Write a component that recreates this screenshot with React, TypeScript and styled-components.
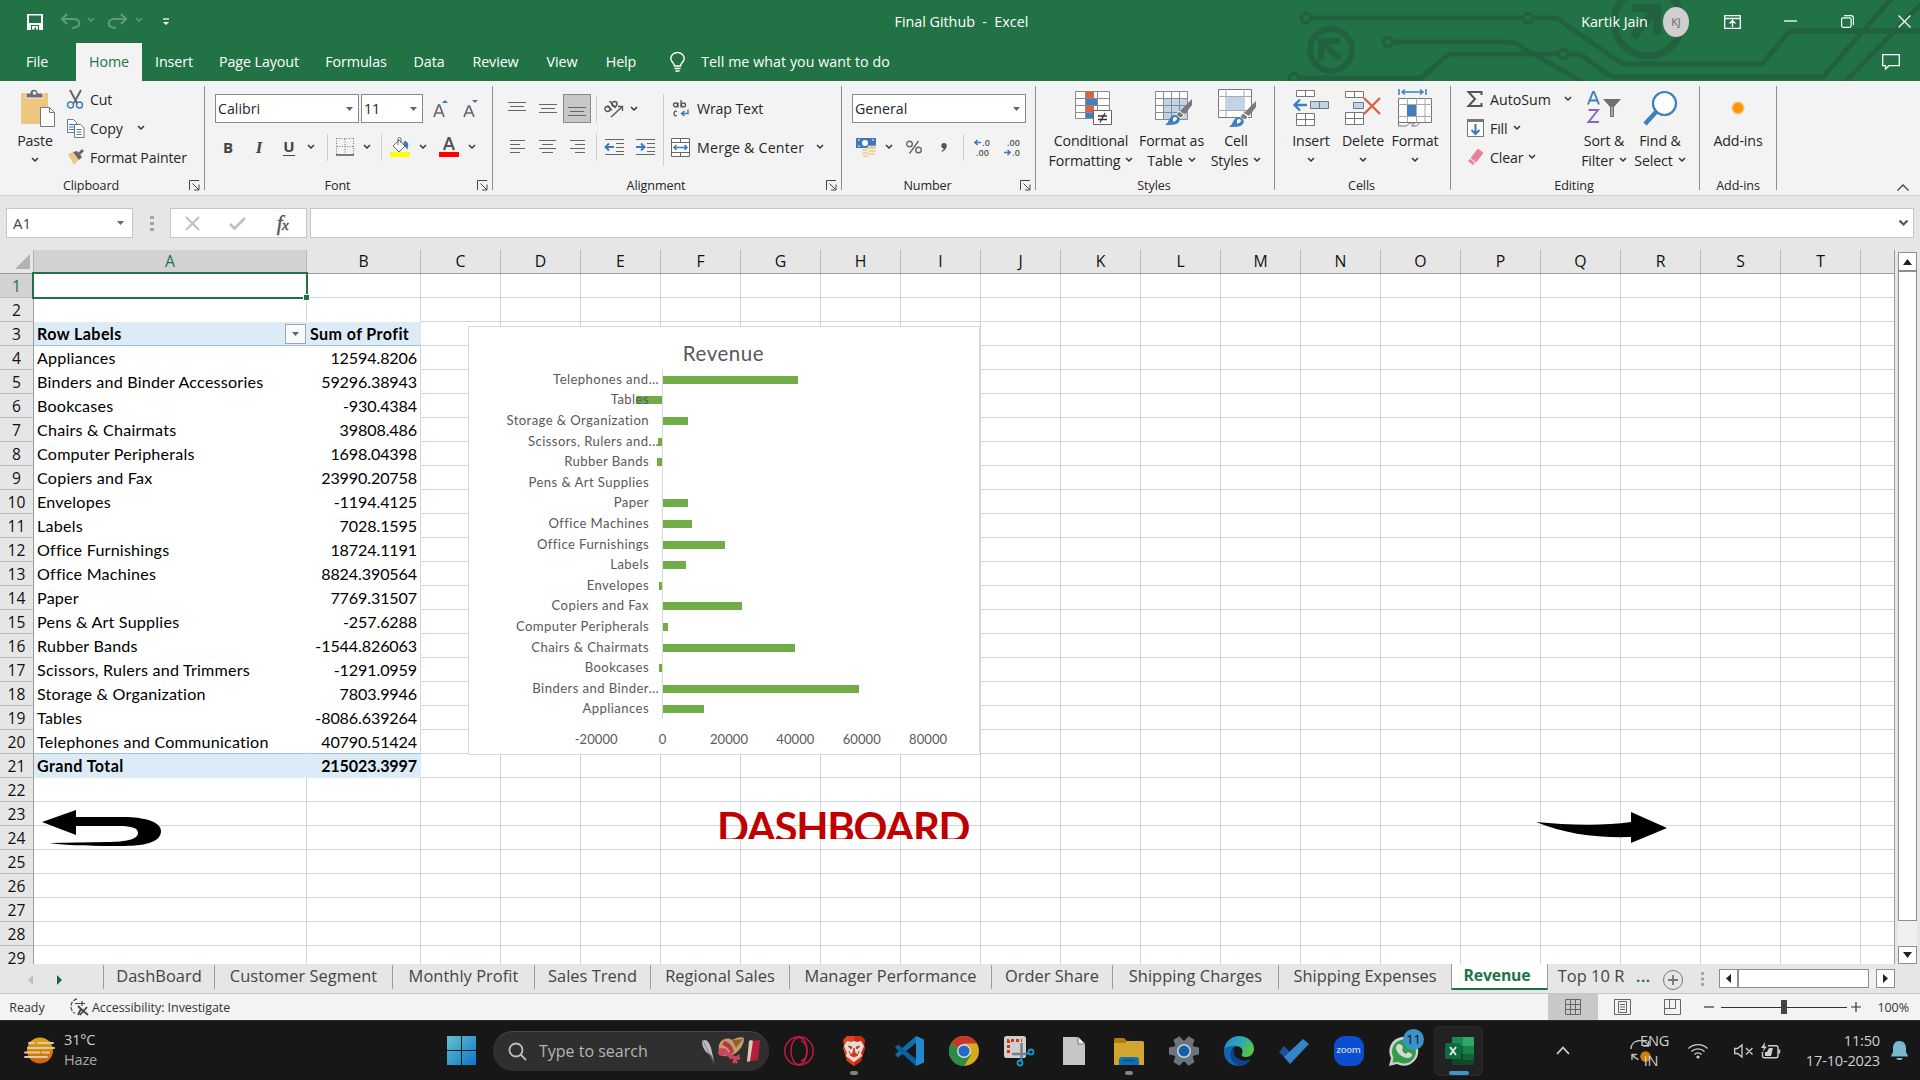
import React from "react";
import styled, { createGlobalStyle } from "styled-components";

const UI = '"Open Sans", "Noto Sans", sans-serif';
const CELL = 'Lato, "Open Sans", sans-serif';

const Global = createGlobalStyle`
  *, *::before, *::after { box-sizing: border-box; }
  html, body { margin: 0; padding: 0; }
  body { font-family: ${UI}; font-size: 14px; color: #262626; overflow: hidden; background: #e6e6e6; }
  svg { display: block; flex-shrink: 0; overflow: visible; }
`;

const Window = styled.div`
  width: 1920px; height: 1080px; display: flex; flex-direction: column; overflow: hidden;
`;

/* ---------- shared ---------- */
const Slot = styled.div<{ $w: number; $align?: string }>`
  width: ${(p) => p.$w}px; flex-shrink: 0; display: flex; align-items: center;
  justify-content: ${(p) => p.$align || "center"}; white-space: nowrap;
`;
const Divider = styled.div<{ $h: number; $c?: string }>`
  width: 1px; height: ${(p) => p.$h}px; background: ${(p) => p.$c || "#cfcfcf"};
`;

const Chevron = ({ c = "#333" }: { c?: string }) => (
  <svg width="8" height="6" viewBox="0 0 8 6"><path d="M1 1l3 3 3-3" fill="none" stroke={c} strokeWidth="1.5" /></svg>
);
const Triangle = ({ c = "#666" }: { c?: string }) => (
  <svg width="7" height="4" viewBox="0 0 7 4"><path d="M0 0h7L3.500 4z" fill={c} /></svg>
);

/* ---------- title bar ---------- */
const Header = styled.header`
  position: relative; height: 81px; flex-shrink: 0; background: #217346; color: #fff;
  display: flex; flex-direction: column;
`;
const HeaderArt = styled.svg`position: absolute; right: 0; top: 0; overflow: hidden;`;
const TitleRow = styled.div`position: relative; height: 43px; display: flex; align-items: center;`;
const TitleText = styled.div`
  width: 200px; margin-left: 664px; text-align: center; font-size: 14.3px; white-space: pre; letter-spacing: 0;
`;
const UserName = styled.div`margin-left: 509px; width: 138px; white-space: nowrap; text-align: right; padding-right: 35px; font-size: 14.3px; letter-spacing: 0;`;
const Avatar = styled.div`
  width: 30px; height: 30px; border-radius: 50%; background: #d0cece; color: #666; margin-left: -20px;
  display: flex; align-items: center; justify-content: center; font-size: 11px; letter-spacing: -0.3px;
`;
const TabRow = styled.nav`position: relative; height: 38px; display: flex; align-items: stretch;`;
const Tab = styled.div<{ $w: number; $on?: boolean }>`
  width: ${(p) => p.$w}px; display: flex; align-items: center; justify-content: center; white-space: nowrap;
  font-size: 14.3px; letter-spacing: -0.1px; color: ${(p) => (p.$on ? "#217346" : "#fff")};
  background: ${(p) => (p.$on ? "#f3f3f3" : "transparent")}; padding-bottom: 2px;
`;

/* ---------- ribbon ---------- */
const Ribbon = styled.section`
  height: 115px; flex-shrink: 0; background: #f3f3f3; border-bottom: 1px solid #d0d0d0; display: flex; padding-top: 5px;
`;
const Group = styled.div<{ $w: number }>`
  position: relative; width: ${(p) => p.$w}px; height: 104px; border-right: 1px solid #8f8f8f;
  display: flex; flex-direction: column; flex-shrink: 0;
`;
const GroupBody = styled.div<{ $pl?: number }>`height: 88px; flex-shrink: 0; display: flex; padding-left: ${(p) => p.$pl || 0}px;`;
const GroupName = styled.div<{ $pr?: number }>`
  height: 22px; flex-shrink: 0; display: flex; align-items: center; justify-content: center; font-size: 12.6px; letter-spacing: -0.1px; color: #262626;
  padding-right: ${(p) => p.$pr || 0}px;
`;
const LauncherBox = styled.div`position: absolute; right: 4px; bottom: -1px;`;
const Launcher = () => (
  <LauncherBox>
    <svg width="11" height="11" viewBox="0 0 11 11" fill="none" stroke="#444" strokeWidth="1">
      <path d="M.5 10V.500H10M3.500 3.500l6 6M10 4.500v5.500H5" />
    </svg>
  </LauncherBox>
);
const Rows = styled.div<{ $pt?: number; $gap?: number }>`
  display: flex; flex-direction: column; padding-top: ${(p) => p.$pt || 0}px; gap: ${(p) => p.$gap || 0}px;
`;
const Row = styled.div<{ $h: number }>`height: ${(p) => p.$h}px; display: flex; align-items: center;`;
const Label = styled.span<{ $ls?: number }>`font-size: 14.2px; letter-spacing: ${(p) => p.$ls ?? -0.15}px; white-space: nowrap;`;
const Big = styled.div<{ $w: number; $ml?: number }>`
  width: ${(p) => p.$w}px; margin-left: ${(p) => p.$ml || 0}px; display: flex; flex-direction: column; align-items: center; flex-shrink: 0;
`;
const BigIcon = styled.div<{ $dx?: number }>`height: 44px; display: flex; align-items: center; justify-content: center; padding-left: ${(p) => (p.$dx || 0) * 2}px;`;
const BigLine = styled.div`
  height: 20px; display: flex; align-items: center; gap: 5px; font-size: 14.2px; letter-spacing: -0.1px; white-space: nowrap;
`;
const Combo = styled.div<{ $w: number }>`
  width: ${(p) => p.$w}px; height: 29px; background: #fff; border: 1px solid #8a8a8a; margin-right: 2px;
  display: flex; align-items: center; justify-content: space-between; padding: 0 5px 0 2px; font-size: 14.2px; flex-shrink: 0;
`;
const Pressed = styled.div`
  width: 28px; height: 29px; background: #c8c8c8; border: 1px solid #8a8a8a; display: flex; align-items: center; justify-content: center;
`;
const Glyph = styled.span<{ $i?: boolean; $u?: boolean; $s?: number }>`
  font-family: ${(p) => (p.$i ? '"Liberation Serif", serif' : UI)}; font-weight: 700; font-size: ${(p) => p.$s || 15}px; color: #444;
  font-style: ${(p) => (p.$i ? "italic" : "normal")}; line-height: 17px;
  border-bottom: ${(p) => (p.$u ? "1px solid #444" : "0")};
`;

const Lines = ({ rows, w = 18 }: { rows: [number, number, number][]; w?: number }) => (
  <svg width={w} height="16" viewBox={`0 0 ${w} 16`} stroke="#666" strokeWidth="1">
    {rows.map(([x1, x2, y], i) => <path key={i} d={`M${x1} ${y + 0.5}H${x2}`} />)}
  </svg>
);
const GrowA = ({ up }: { up?: boolean }) => (
  <svg width="17" height="18" viewBox="0 0 17 18">
    <path d={up ? "M2 17L6.500 5h1L12 17M3.800 13h6.500" : "M2 17L6.500 6h1L12 17M3.800 13h6.500"} fill="none" stroke="#666" strokeWidth="1.7" />
    <path d={up ? "M10 3l3-3 3 3z" : "M10 0h6l-3 3z"} fill="#3f78b8" />
  </svg>
);
const Indent = ({ right }: { right?: boolean }) => (
  <svg width="19" height="18" viewBox="0 0 19 18" fill="none">
    <path d="M0 1.500h19M11 5.500h8M11 9.500h8M11 13.500h8M0 16.500h19" stroke="#666" />
    <path d={right ? "M0 9h8M5 5.500L8.500 9 5 12.500" : "M1 9h8M4 5.500L.500 9 4 12.500"} stroke="#3f78b8" strokeWidth="2" />
  </svg>
);
const Brush = ({ x, y }: { x: number; y: number }) => (
  <g transform={`translate(${x} ${y})`}>
    <path d="M27 0v6l-7 9-5-3z" fill="#7a7a7a" />
    <path d="M14 12l5 4-3 3-5-3z" fill="#7a7a7a" stroke="#f3f3f3" />
    <path d="M0 26c4-2 4-9 9-10 5 0 7 4 5 7-2 3-8 3-14 3z" fill="#3f7fbf" />
    <path d="M8 19c2-2 4-1 4 1-1 2-3 2-4 3z" fill="#fff" />
  </g>
);

/* ---------- formula bar ---------- */
const FormulaBar = styled.section`
  height: 54px; flex-shrink: 0; background: #e6e6e6; display: flex; padding: 12px 6px 0; align-items: flex-start;
`;
const Field = styled.div<{ $w: number; $ml?: number }>`
  width: ${(p) => p.$w}px; height: 30px; margin-left: ${(p) => p.$ml || 0}px; background: #fff; border: 1px solid #c6c6c6;
  display: flex; align-items: center; justify-content: space-between; padding: 0 8px 0 6px; font-size: 15px; color: #444;
`;
const Input = styled(Field)`padding-right: 5px;`;
const Fx = styled.span`font-family: "Liberation Serif", serif; font-style: italic; font-size: 21px; font-weight: 400; color: #555; letter-spacing: -0.5px; -webkit-text-stroke: 0.4px #555;
  small { font-size: 15px; }`;

/* ---------- sheet ---------- */
const Main = styled.main`height: 715px; flex-shrink: 0; display: flex; background: #e6e6e6;`;
const Sheet = styled.div`position: relative; width: 1895px; height: 714px; overflow: hidden; border-right: 1px solid #9b9b9b;`;
const HeadRow = styled.div`display: flex; height: 24px; border-bottom: 1px solid #9b9b9b;`;
const Corner = styled.div`width: 34px; border-right: 1px solid #b1b1b1; display: flex; align-items: flex-end; justify-content: flex-end; padding: 0 3px 4px 0; background: #e6e6e6;`;
const ColHead = styled.div<{ $w: number; $on?: boolean }>`
  width: ${(p) => p.$w}px; flex-shrink: 0; border-right: 1px solid #b8b8b8; background: ${(p) => (p.$on ? "#d2d2d2" : "#e6e6e6")};
  color: ${(p) => (p.$on ? "#217346" : "#111")}; display: flex; align-items: center; justify-content: center; font-size: 15.8px; padding-bottom: 1px;
`;
const GridRow = styled.div`display: flex; height: 24px; width: 1894px; background: #fff;`;
const RowHead = styled.div<{ $on?: boolean }>`
  width: 34px; flex-shrink: 0; border-right: 1px solid #9b9b9b; border-bottom: 1px solid #bdbdbd;
  background: ${(p) => (p.$on ? "#d2d2d2" : "#e6e6e6")}; color: ${(p) => (p.$on ? "#217346" : "#111")};
  font-size: 15.6px; line-height: 24px; text-align: center;
`;
const Cell = styled.div<{ $w: number; $tone?: string; $right?: boolean; $num?: boolean }>`
  width: ${(p) => p.$w}px; flex-shrink: 0; padding: 0 3px; white-space: nowrap;
  font: 400 16.1px/25px ${CELL}; color: #000; letter-spacing: ${(p) => (p.$num ? -0.12 : p.$tone === "head" || p.$tone === "total" ? 0.4 : 0.22)}px;
  border-right: 1px solid #d4d4d4; border-bottom: 1px solid #d4d4d4; display: flex; align-items: center;
  justify-content: ${(p) => (p.$right ? "flex-end" : "space-between")};
  ${(p) => p.$tone === "head" && "background:#ddebf7;border-right-color:#ddebf7;border-bottom-color:#9bc2e6;font-weight:700;"}
  ${(p) => p.$tone === "total" && "background:#ddebf7;border-right-color:#ddebf7;border-bottom-color:#ddebf7;font-weight:700;"}
  ${(p) => p.$tone === "body" && "border-color:#fff;"}
  ${(p) => p.$tone === "edge" && "border-bottom-color:#fff;"}
  ${(p) => p.$tone === "last" && "border-right-color:#fff;border-bottom-color:#9bc2e6;"}
  ${(p) => p.$right && (p.$tone === "body" || p.$tone === "last") && "border-right-color:#d4d4d4;"}
`;
const FilterButton = styled.span`
  width: 21px; height: 20px; margin-right: -3px; border: 1px solid #a6a6a6; background: #f7f9fb; display: flex; align-items: center; justify-content: center;
`;
const Selection = styled.div`
  position: absolute; left: 32px; top: 22px; width: 276px; height: 27px; border: 2px solid #217346;
  &::after { content: ""; position: absolute; right: -3px; bottom: -3px; width: 5px; height: 5px; background: #217346; box-shadow: 0 0 0 1px #fff; }
`;
const Chart = styled.div`
  position: absolute; left: 468px; top: 76px; width: 512px; height: 429px; background: #fff; border: 1px solid #d9d9d9;
  display: flex; flex-direction: column; font-family: ${CELL}; color: #595959;
`;
const ChartTitle = styled.div`height: 42px; flex-shrink: 0; padding-top: 12px; text-align: center; font-size: 20.5px; line-height: 28px; letter-spacing: 0.55px; padding-right: 1px;`;
const Plot = styled.div`height: 350px; flex-shrink: 0; display: flex; flex-direction: column;`;
const ChartRow = styled.div`flex: 1; display: flex; align-items: center;`;
const ChartLabel = styled.div<{ $cut?: boolean }>`
  width: 193px; padding-right: ${(p) => (p.$cut ? 3 : 13)}px; text-align: right; font-size: 13.1px; white-space: nowrap; letter-spacing: 0.42px;
  position: relative; z-index: 1; margin-top: -1px;
`;
const Track = styled.div`width: 300px; height: 100%; border-left: 1px solid #d9d9d9; display: flex; align-items: center;`;
const Bar = styled.div`height: 8px; background: #70ad47; margin-top: 1px; flex-shrink: 0;`;
const Axis = styled.div`display: flex; padding: 4px 0 0 94px; height: 35px; flex-shrink: 0; align-items: center;`;
const Tick = styled.div`width: 66.4px; text-align: center; font-size: 13px; letter-spacing: 0.1px;`;
const SheetTitle = styled.div`
  position: absolute; left: 717px; top: 552px; width: 256px; height: 37px; overflow: hidden; white-space: nowrap;
  font: 700 42px/50px ${CELL}; color: #c00000; letter-spacing: -1.35px;
`;
const ArrowBack = styled.svg`position: absolute; left: 42px; top: 559px;`;
const ArrowNext = styled.svg`position: absolute; left: 1536px; top: 562px;`;

const VScroll = styled.div`width: 19px; margin: 2px 0 1px 3px; display: flex; flex-direction: column; background: #f0f0f0;`;
const ScrollBtn = styled.div<{ $w: number; $h: number }>`
  width: ${(p) => p.$w}px; height: ${(p) => p.$h}px; border: 1px solid #8e8e8e; background: #fff; display: flex; align-items: center; justify-content: center; flex-shrink: 0;
`;
const ScrollGap = styled.div`flex: 1;`;

/* ---------- sheet tabs ---------- */
const SheetTabs = styled.div`height: 29px; flex-shrink: 0; background: #e6e6e6; border-bottom: 1px solid #c6c6c6; display: flex;`;
const SheetTab = styled.div<{ $w: number; $on?: boolean; $line?: boolean }>`
  position: relative; width: ${(p) => p.$w}px; height: ${(p) => (p.$on ? 26 : 24)}px; margin-top: ${(p) => (p.$on ? -1 : 0)}px; flex-shrink: 0; white-space: nowrap;
  font-size: ${(p) => (p.$on ? 15.8 : 16.4)}px; letter-spacing: ${(p) => (p.$on ? -0.2 : 0.05)}px; line-height: ${(p) => (p.$on ? 23 : 21)}px; text-align: center; color: ${(p) => (p.$on ? "#217346" : "#444")};
  font-weight: ${(p) => (p.$on ? 700 : 400)}; background: ${(p) => (p.$on ? "#fff" : "transparent")};
  border-bottom: ${(p) => (p.$on ? "2px solid #217346" : "0")};
  border-left: ${(p) => (p.$on ? "1px solid #9b9b9b" : "0")};
  border-right: ${(p) => (p.$line || p.$on ? "1px solid #9b9b9b" : "0")};
  padding-right: ${(p) => (p.$on ? 5 : 0)}px;
`;
const Nav = styled.div`width: 104px; height: 24px; border-right: 1px solid #9b9b9b; display: flex; align-items: center; padding: 6px 0 0 28px; gap: 24px;`;
const TabDots = styled.span`color: #217346; font-weight: 700; font-size: 15px; line-height: 22px; width: 22px; padding-left: 2px; letter-spacing: 0.6px;`;
const HTrack = styled.div`display: flex; margin: 4px 0 0 14px; height: 19px; background: #f0f0f0; width: 176px; justify-content: space-between;`;
const HLeft = styled.div`display: flex;`;
const HDots = styled.div`margin: 7px 0 0 11px;`;

/* ---------- status ---------- */
const Status = styled.footer`height: 26px; flex-shrink: 0; background: #f3f3f3; display: flex; align-items: center; font-size: 12.5px; letter-spacing: -0.05px; color: #333;`;
const ViewBtn = styled.div<{ $w: number; $on?: boolean }>`
  width: ${(p) => p.$w}px; height: 26px; background: ${(p) => (p.$on ? "#c8c8c8" : "transparent")}; display: flex; align-items: center; justify-content: center; flex-shrink: 0;
`;
const Zoom = styled.div`width: 126px; flex-shrink: 0; margin: 0 4px 0 7px; height: 15px; display: flex; align-items: center; justify-content: center;
  background: linear-gradient(#333, #333) 0 7px / 100% 1px no-repeat;`;
const Thumb = styled.div`width: 6px; height: 14px; background: #444;`;

/* ---------- taskbar ---------- */
const Taskbar = styled.div`
  height: 60px; flex-shrink: 0; background: #171717; border-top: 1px solid #2c2c2c; display: flex; align-items: center; color: #cfcfcf; font-size: 14.6px; letter-spacing: -0.2px;
`;
const Weather = styled.div`width: 424px; flex-shrink: 0; padding-left: 24px; display: flex; align-items: center; gap: 9px; line-height: 20px;`;
const WeatherText = styled.div`margin-top: -3px; line-height: 20px;`;
const Dim = styled.div`color: #a8a8a8;`;
const Search = styled.div`
  width: 276px; flex-shrink: 0; height: 40px; border-radius: 20px; background: #2f2f2f; border-top: 1px solid #484848; margin: 0 2px 0 17px;
  display: flex; align-items: center; padding: 0 8px 0 15px; font-size: 16px; letter-spacing: 0; color: #b5b5b5;
`;
const SearchText = styled.span`flex: 1; padding-left: 12px;`;
const AppButton = styled.div<{ $on?: boolean }>`
  position: relative; width: 49px; height: 50px; margin: 0 3px; border-radius: 6px; flex-shrink: 0;
  background: ${(p) => (p.$on ? "#222" : "transparent")}; box-shadow: ${(p) => (p.$on ? "inset 0 0 0 1px #2b2b2b" : "none")};
  display: flex; align-items: center; justify-content: center;
`;
const Run = styled.div<{ $on?: boolean }>`
  position: absolute; bottom: 1px; width: ${(p) => (p.$on ? 20 : 8)}px; height: 4px; border-radius: 2px; background: ${(p) => (p.$on ? "#3d96cc" : "#838383")};
`;
const Badge = styled.div`
  position: absolute; right: 4px; top: 3px; width: 21px; height: 21px; border-radius: 50%; background: #3a93c6; color: #0d0d0d;
  font-size: 13px; display: flex; align-items: center; justify-content: center;
`;
const ZoomApp = styled.div`
  width: 30px; height: 30px; border-radius: 11px; background: #0b4fd0; color: #c9d4ea; font-size: 9.5px; font-weight: 600; letter-spacing: -0.3px;
  display: flex; align-items: center; justify-content: center; line-height: 12px; padding-bottom: 2px;
`;
const Stack = styled.div<{ $w: number; $right?: boolean }>`
  width: ${(p) => p.$w}px; flex-shrink: 0; text-align: ${(p) => (p.$right ? "right" : "center")}; line-height: 20px; white-space: nowrap; margin-top: -2px;
`;

/* ---------- data ---------- */
const data: [string, string][] = [
  ["Appliances", "12594.8206"], ["Binders and Binder Accessories", "59296.38943"], ["Bookcases", "-930.4384"],
  ["Chairs & Chairmats", "39808.486"], ["Computer Peripherals", "1698.04398"], ["Copiers and Fax", "23990.20758"],
  ["Envelopes", "-1194.4125"], ["Labels", "7028.1595"], ["Office Furnishings", "18724.1191"],
  ["Office Machines", "8824.390564"], ["Paper", "7769.31507"], ["Pens & Art Supplies", "-257.6288"],
  ["Rubber Bands", "-1544.826063"], ["Scissors, Rulers and Trimmers", "-1291.0959"], ["Storage & Organization", "7803.9946"],
  ["Tables", "-8086.639264"], ["Telephones and Communication", "40790.51424"],
];
const shortNames: Record<string, string> = {
  "Telephones and Communication": "Telephones and...",
  "Scissors, Rulers and Trimmers": "Scissors, Rulers and...",
  "Binders and Binder Accessories": "Binders and Binder...",
};
const letters = "CDEFGHIJKLMNOPQRST".split("");
const tabs: [string, number][] = [
  ["DashBoard", 111], ["Customer Segment", 178], ["Monthly Profit", 142], ["Sales Trend", 116], ["Regional Sales", 139],
  ["Manager Performance", 202], ["Order Share", 121], ["Shipping Charges", 166], ["Shipping Expenses", 172],
];

const toneFor = (r: number) => (r === 2 ? "edge" : r === 3 ? "head" : r === 20 ? "last" : r === 21 ? "total" : r > 3 && r < 20 ? "body" : "");

const GridLine = ({ r }: { r: number }) => {
  const item = r > 3 && r < 21 ? data[r - 4] : r === 3 ? ["Row Labels", "Sum of Profit"] : r === 21 ? ["Grand Total", "215023.3997"] : ["", ""];
  const tone = toneFor(r);
  return (
    <GridRow>
      <RowHead $on={r === 1}>{r}</RowHead>
      <Cell $w={273} $tone={tone}>{item[0]}{r === 3 && <FilterButton><Triangle /></FilterButton>}</Cell>
      <Cell $w={114} $tone={tone} $right={r !== 3} $num={r !== 3}>{item[1]}</Cell>
      {letters.map((l) => <Cell key={l} $w={80} />)}
      <Cell $w={34} />
    </GridRow>
  );
};

const RevenueChart = () => (
  <Chart>
    <ChartTitle>Revenue</ChartTitle>
    <Plot>
      {[...data].reverse().map(([name, value]) => {
        const px = (Number(value) / 20000) * 66.4;
        const w = Math.floor(Math.abs(px));
        return (
          <ChartRow key={name}>
            <ChartLabel $cut={name in shortNames}>{shortNames[name] || name}</ChartLabel>
            <Track><Bar style={{ width: w, marginLeft: px < 0 ? -w - 1 : 0 }} /></Track>
          </ChartRow>
        );
      })}
    </Plot>
    <Axis>{[-20000, 0, 20000, 40000, 60000, 80000].map((t) => <Tick key={t}>{t}</Tick>)}</Axis>
  </Chart>
);

const Chevrons = ({ children }: { children: string }) => <BigLine>{children}<Chevron /></BigLine>;

const ClipboardGroup = () => (
  <Group $w={205}>
    <GroupBody>
      <Big $w={64} $ml={3}>
        <BigIcon $dx={3}>
          <svg width="36" height="38" viewBox="0 0 36 38">
            <path d="M1 4h27v31H1z" fill="#edc77f" /><path d="M6 9V4h4c0-5 8-5 8 0h5v5z" fill="#6e6e6e" stroke="#f3f3f3" /><circle cx="14.500" cy="4" r="1.800" fill="#f3f3f3" />
            <path d="M20.500 18.500h9l5 5v14h-14z" fill="#fff" stroke="#777" /><path d="M29.500 18.500v5h5" fill="none" stroke="#777" />
          </svg>
        </BigIcon>
        <BigLine>Paste</BigLine><BigLine><Chevron /></BigLine>
      </Big>
      <Rows>
        <Row $h={26}>
          <Slot $w={23} $align="flex-start"><svg width="17" height="19" viewBox="0 0 17 19" fill="none"><path d="M3 0l7 13M14 0L7 13" stroke="#666" strokeWidth="2" /><circle cx="3.500" cy="15" r="3" stroke="#3f78b8" strokeWidth="1.400" /><circle cx="12.500" cy="15" r="3" stroke="#3f78b8" strokeWidth="1.400" /></svg></Slot>
          <Label>Cut</Label>
        </Row>
        <Row $h={32}>
          <Slot $w={23} $align="flex-start"><svg width="18" height="19" viewBox="0 0 18 19"><path d="M.5.500h6l3 3v10h-9z" fill="#fff" stroke="#777" /><path d="M2 5.500h5M2 8h5M2 10.500h5" stroke="#3f78b8" /><path d="M7.500 5.500h6l3.500 3.500v9.500H7.500z" fill="#fff" stroke="#777" /><path d="M9.500 10.500h5M9.500 13h5M9.500 15.500h5" stroke="#3f78b8" /></svg></Slot>
          <Slot $w={46} $align="flex-start"><Label>Copy</Label></Slot><Slot $w={10}><Chevron /></Slot>
        </Row>
        <Row $h={26}>
          <Slot $w={23} $align="flex-start"><svg width="17" height="16" viewBox="0 0 17 16"><path d="M1 5l5-2 6 7-5 6z" fill="#edc77f" /><path d="M6 3l4-1 5 6-3 3z" fill="#666" /><path d="M11 4l4-4 2 2-4 4z" fill="#666" /></svg></Slot>
          <Label>Format Painter</Label>
        </Row>
      </Rows>
    </GroupBody>
    <GroupName $pr={22}>Clipboard</GroupName><Launcher />
  </Group>
);

const FontGroup = () => (
  <Group $w={288}>
    <GroupBody $pl={10}>
      <Rows $pt={8} $gap={4}>
        <Row $h={29}>
          <Combo $w={144}>Calibri<Triangle /></Combo><Combo $w={62}>11<Triangle /></Combo>
          <Slot $w={30}><GrowA up /></Slot><Slot $w={30}><GrowA /></Slot>
        </Row>
        <Row $h={40}>
          <Slot $w={26}><Glyph>B</Glyph></Slot><Slot $w={36}><Glyph $i $s={17}>I</Glyph></Slot><Slot $w={24}><Glyph $u>U</Glyph></Slot>
          <Slot $w={20}><Chevron /></Slot><Slot $w={12}><Divider $h={27} /></Slot>
          <Slot $w={24}><svg width="18" height="18" viewBox="0 0 18 18" fill="none" stroke="#777"><path d="M.5 0v16M.5.500H17M17.500 0v16M9 1v15M1 8.500h16" strokeDasharray="1 1.500" /><path d="M0 17h18" strokeWidth="1.500" stroke="#555" /></svg></Slot>
          <Slot $w={20}><Chevron /></Slot><Slot $w={8}><Divider $h={27} /></Slot>
          <Slot $w={30}><svg width="20" height="20" viewBox="0 0 20 20"><path d="M14 4c5 0 5 5 3 9-1-3-2-4-4-4z" fill="#3f78b8" /><path d="M9 3l6 6-6 6-6-6z" fill="#fff" stroke="#666" /><path d="M8 8V2c0-2 3-2 3 0v4" fill="none" stroke="#666" /><path d="M0 15h20v5H0z" fill="#ff0" /></svg></Slot>
          <Slot $w={16}><Chevron /></Slot>
          <Slot $w={36}><svg width="20" height="20" viewBox="0 0 20 20"><path d="M5 13L9.500 1h1L15 13M6.500 9h7" fill="none" stroke="#555" strokeWidth="2.200" /><path d="M0 15h20v5H0z" fill="#f00" /></svg></Slot>
          <Slot $w={10}><Chevron /></Slot>
        </Row>
      </Rows>
    </GroupBody>
    <GroupName $pr={22}>Font</GroupName><Launcher />
  </Group>
);

const AlignGroup = () => (
  <Group $w={349}>
    <GroupBody $pl={9}>
      <Rows $pt={8} $gap={4}>
        <Row $h={29}>
          <Slot $w={30}><Lines rows={[[0, 18, 1], [2, 16, 5], [0, 18, 9]]} /></Slot>
          <Slot $w={31}><Lines rows={[[0, 18, 3], [2, 16, 7], [0, 18, 11]]} /></Slot>
          <Pressed><Lines rows={[[0, 18, 6], [2, 16, 10], [0, 18, 14]]} /></Pressed>
          <Slot $w={10}><Divider $h={28} /></Slot>
          <Slot $w={26}><svg width="20" height="18" viewBox="0 0 20 18" fill="none" stroke="#555" strokeWidth="1.400"><circle cx="3.500" cy="9" r="2.500" /><path d="M3.500 5.500l4.500 5M5.500 1l6 7" /><circle cx="10.500" cy="4" r="2.500" /><path d="M7 17L18 7M14 6.500h4.500V11" /></svg></Slot>
          <Slot $w={14}><Chevron /></Slot>
        </Row>
        <Row $h={40}>
          <Slot $w={30}><Lines w={15} rows={[[0, 15, 1], [0, 10, 5], [0, 15, 9], [0, 10, 13]]} /></Slot>
          <Slot $w={31}><Lines w={17} rows={[[0, 17, 1], [3, 14, 5], [0, 17, 9], [3, 14, 13]]} /></Slot>
          <Slot $w={28}><Lines w={15} rows={[[0, 15, 1], [5, 15, 5], [0, 15, 9], [5, 15, 13]]} /></Slot>
          <Slot $w={10}><Divider $h={28} /></Slot>
          <Slot $w={26}><Indent /></Slot><Slot $w={36}><Indent right /></Slot>
        </Row>
      </Rows>
      <Slot $w={1}><Divider $h={72} /></Slot>
      <Rows $pt={8} $gap={4}>
        <Row $h={29}>
          <Slot $w={33}><svg width="19" height="19" viewBox="0 0 19 19" fill="none" stroke="#555" strokeWidth="1.300"><circle cx="4.500" cy="6" r="2" /><path d="M7 3.500V8.500M10 1v7.500" /><circle cx="12.500" cy="6" r="2" /><path d="M6 12.500c-4-2-4 6 0 4" /><path d="M17 10.500v4h-6M13.500 12l-3 2.500 3 2.500" stroke="#3f78b8" strokeWidth="1.500" /></svg></Slot>
          <Label>Wrap Text</Label>
        </Row>
        <Row $h={40}>
          <Slot $w={33}><svg width="19" height="19" viewBox="0 0 19 19" fill="#fff" stroke="#666"><path d="M.5.500h18v18H.500zM9.500 0v4M9.500 15v4M0 4.500h19M0 14.500h19" /><path d="M3 9.500h13M5.500 7L3 9.500 5.500 12M13.500 7L16 9.500 13.500 12" fill="none" stroke="#3f78b8" strokeWidth="1.500" /></svg></Slot>
          <Slot $w={119} $align="flex-start"><Label $ls={0.2}>Merge &amp; Center</Label></Slot><Chevron />
        </Row>
      </Rows>
    </GroupBody>
    <GroupName $pr={22}>Alignment</GroupName><Launcher />
  </Group>
);

const Dec = ({ less }: { less?: boolean }) => (
  <svg width="17" height="18" viewBox="0 0 17 18" fontFamily={UI} fontSize="9" fontWeight="600" fill="#555" stroke="none">
    <text x={less ? 3 : 8} y="8" textLength={less ? 13 : 8}>{less ? ".00" : ".0"}</text>
    <text x={less ? 8 : 2} y="18" textLength={less ? 8 : 13}>{less ? ".0" : ".00"}</text>
    <path d={less ? "M0 14.500h6M3.500 12L6 14.500 3.500 17" : "M1 4.500h6M3.500 2L1 4.500 3.500 7"} fill="none" stroke="#3f78b8" strokeWidth="1.600" />
  </svg>
);

const NumberGroup = () => (
  <Group $w={194}>
    <GroupBody $pl={10}>
      <Rows $pt={8} $gap={4}>
        <Row $h={29}><Combo $w={174}>General<Triangle /></Combo></Row>
        <Row $h={40}>
          <Slot $w={28}><svg width="20" height="20" viewBox="0 0 20 20"><path d="M0 1h20v10H0z" fill="#3f78b8" /><circle cx="9" cy="6" r="3" fill="#fff" /><path d="M2 3h2M2 9h2M16 3h2" stroke="#fff" /><path d="M12 9h8v3h-8zM12 13h8v2h-8zM11 16h8v2h-8zM6 12h7v2H6zM6 15h7v2H6zM7 18h6v2H7z" fill="#edc77f" stroke="#f3f3f3" strokeWidth=".6" /></svg></Slot>
          <Slot $w={17}><Chevron /></Slot>
          <Slot $w={34}><svg width="16" height="14" viewBox="0 0 16 14" fill="none" stroke="#666" strokeWidth="1.400"><circle cx="3.500" cy="4" r="2.800" /><circle cx="12.500" cy="10" r="2.800" /><path d="M12.500 1l-9 12.500" /></svg></Slot>
          <Slot $w={26}><svg width="6" height="9" viewBox="0 0 6 9"><path d="M3 0c4 0 4 6-2 9l-.5-1C2.500 7 3 6 2.500 5.500-.5 5-.5 0 3 0z" fill="#555" /></svg></Slot>
          <Slot $w={12}><Divider $h={27} /></Slot>
          <Slot $w={26}><Dec /></Slot><Slot $w={34}><Dec less /></Slot>
        </Row>
      </Rows>
    </GroupBody>
    <GroupName $pr={22}>Number</GroupName><Launcher />
  </Group>
);

const StylesGroup = () => (
  <Group $w={239}>
    <GroupBody>
      <Big $w={84} $ml={13}>
        <BigIcon $dx={2}><svg width="37" height="34" viewBox="0 0 37 34"><path d="M.5.500h34v27H.500z" fill="#fff" /><path d="M11 0h8v7h-8zM11 14h8v7h-8z" fill="#d9623f" /><path d="M11 7h11v7H11zM11 21h8v7h-8z" fill="#3f7fbf" /><path d="M.5.500h34v27H.500zM10.500 0v28M22.500 0v28M0 7.500h34M0 14.500h34M0 21.500h34" fill="none" stroke="#8a8a8a" /><path d="M18.500 19.500h18v14h-18z" fill="#fff" stroke="#666" /><path d="M23 25h9M23 28.500h9M30 22l-5 9.500" stroke="#333" strokeWidth="1.300" /></svg></BigIcon>
        <BigLine>Conditional</BigLine><Chevrons>Formatting</Chevrons>
      </Big>
      <Big $w={77}>
        <BigIcon $dx={2}><svg width="37" height="35" viewBox="0 0 37 35"><path d="M.5.500h32v28H.500z" fill="#fff" /><path d="M8 8h24v20H8z" fill="#bfd3ea" /><path d="M.5.500h32v28H.500zM8.500 0v28M16.500 0v28M24.500 0v28M0 7.500h33M0 14.500h33M0 21.500h33" fill="none" stroke="#8a8a8a" /><Brush x={10} y={8} /></svg></BigIcon>
        <BigLine>Format as</BigLine><Chevrons>Table</Chevrons>
      </Big>
      <Big $w={52}>
        <BigIcon $dx={1}><svg width="38" height="38" viewBox="0 0 38 38"><path d="M.5.500h33v28H.500z" fill="#fff" stroke="#777" /><path d="M8 0v28M26 0v28M0 7.500h33M0 21.500h33" stroke="#aaa" /><path d="M8 8h18v13H8z" fill="#bfd3ea" /><Brush x={11} y={12} /></svg></BigIcon>
        <BigLine>Cell</BigLine><Chevrons>Styles</Chevrons>
      </Big>
    </GroupBody>
    <GroupName $pr={2}>Styles</GroupName>
  </Group>
);

const CellsGroup = () => (
  <Group $w={176}>
    <GroupBody>
      <Big $w={52} $ml={10}>
        <BigIcon><svg width="36" height="36" viewBox="0 0 36 36" fill="#fff" stroke="#777"><path d="M3.500.500h18v6h-18zM12.500.500v6M3.500 23.500h18v12h-18zM12.500 23.500v12M3.500 29.500h18" /><path d="M17.500 11.500h18v7h-18zM26.500 11.500v7" fill="#bfd3ea" /><path d="M2 15h12M7 9.500L1.500 15 7 20.500" fill="none" stroke="#3f7fbf" strokeWidth="2.400" /></svg></BigIcon>
        <BigLine>Insert</BigLine><BigLine><Chevron /></BigLine>
      </Big>
      <Big $w={52}>
        <BigIcon><svg width="36" height="36" viewBox="0 0 36 36" fill="#fff" stroke="#777"><path d="M.5 1.500h18v6h-18zM9.500 1.500v6M.5 22.500h18v12h-18zM9.500 22.500v12M.5 28.500h18" /><path d="M8.500 12.500h10v6h-10z" fill="#bfd3ea" /><path d="M19 8l16 16M35 8L19 24" fill="none" stroke="#d9623f" strokeWidth="2.400" /></svg></BigIcon>
        <BigLine>Delete</BigLine><BigLine><Chevron /></BigLine>
      </Big>
      <Big $w={52}>
        <BigIcon><svg width="35" height="38" viewBox="0 0 35 38" fill="none" stroke="#777"><path d="M1 0v6M28 0v6M4 3h21M7 .500L4 3l3 2.500M22 .500L25 3l-3 2.500" stroke="#3f7fbf" strokeWidth="1.500" /><path d="M.5 9.500h33v24H.500z" fill="#fff" /><path d="M9.500 9v24M18.500 9v24M27 9v24M0 15.500h34M0 27.500h34" stroke="#aaa" /><path d="M9 16h9v11H9z" fill="#3f7fbf" stroke="none" /><path d="M.5 33v4h8l3-3h5l-3 3h5l4-4" /></svg></BigIcon>
        <BigLine>Format</BigLine><BigLine><Chevron /></BigLine>
      </Big>
    </GroupBody>
    <GroupName $pr={2}>Cells</GroupName>
  </Group>
);

const EditingGroup = () => (
  <Group $w={249}>
    <GroupBody $pl={16}>
      <Rows>
        <Row $h={26}>
          <Slot $w={23} $align="flex-start"><svg width="16" height="16" viewBox="0 0 16 16"><path d="M14.500 4V1H1.500l6.500 7-6.500 7h13v-3" fill="none" stroke="#555" strokeWidth="2" /></svg></Slot>
          <Slot $w={74} $align="flex-start"><Label $ls={0}>AutoSum</Label></Slot><Chevron />
        </Row>
        <Row $h={32}>
          <Slot $w={23} $align="flex-start"><svg width="17" height="18" viewBox="0 0 17 18"><path d="M.5.500h16v17H.500z" fill="#fff" stroke="#777" /><path d="M0 0h17v3H0z" fill="#777" /><path d="M8.500 5v10M4.500 11l4 4 4-4" fill="none" stroke="#3f78b8" strokeWidth="2" /></svg></Slot>
          <Slot $w={23} $align="flex-start"><Label>Fill</Label></Slot><Chevron />
        </Row>
        <Row $h={26}>
          <Slot $w={23} $align="flex-start"><svg width="17" height="16" viewBox="0 0 17 16"><path d="M11 0l5 4-7 9-5-4z" fill="#e6839a" stroke="#e6839a" /><path d="M3 10l5 4-2 2-5-4z" fill="#e6839a" /></svg></Slot>
          <Slot $w={38} $align="flex-start"><Label>Clear</Label></Slot><Chevron />
        </Row>
      </Rows>
      <Big $w={56} $ml={4}>
        <BigIcon><svg width="34" height="34" viewBox="0 0 34 34" fill="none"><path d="M1 13.500L6 1h1l5 12.500M3 9.500h7" stroke="#3f7fbf" strokeWidth="1.900" /><path d="M1.500 19h9.500L1.500 31H12" stroke="#9163b5" strokeWidth="1.900" /><path d="M16 8h18l-7 8v10h-4V16z" fill="#707070" /><path d="M25 16v9" stroke="#ddd" /></svg></BigIcon>
        <BigLine>Sort &amp;</BigLine><Chevrons>Filter</Chevrons>
      </Big>
      <Big $w={56}>
        <BigIcon><svg width="35" height="35" viewBox="0 0 35 35"><path d="M13 21L2 33" stroke="#3f7fbf" strokeWidth="4.500" /><circle cx="21.500" cy="12.500" r="11.500" fill="#fff" stroke="#3f7fbf" strokeWidth="2.200" /></svg></BigIcon>
        <BigLine>Find &amp;</BigLine><Chevrons>Select</Chevrons>
      </Big>
    </GroupBody>
    <GroupName $pr={2}>Editing</GroupName>
  </Group>
);

const Collapse = styled.div`margin-left: auto; align-self: flex-end; padding: 0 11px 4px 0;`;

const icon = { width: 30, height: 30, viewBox: "0 0 30 30" };
const Opera = () => <svg {...icon} fill="none" stroke="#c01a42" strokeWidth="1.500"><circle cx="15" cy="15" r="14.200" /><ellipse cx="15" cy="15" rx="8" ry="13.500" /><path d="M17 5c8 1 8 19 0 20" /></svg>;
const Brave = () => (
  <svg {...icon}><path d="M8 0h14l4 4-1 5 1 3-4 13-7 5-7-5L4 12l1-3-1-5z" fill="#e2431c" /><path d="M15 0h7l4 4-1 5 1 3-4 13-7 5z" fill="#cf2a08" />
    <path d="M8 5l4 1 3-1 3 1 4-1 3 5-3 7 1 3-4 3-4 3-4-3-4-3 1-3-3-7z" fill="#ddd" /><path d="M9 10l4 1-1 2zM21 10l-4 1 1 2zM15 12l-1 5-3 2 4 2 4-2-3-2zM10 15l1 3M20 15l-1 3" fill="#d8380f" stroke="#d8380f" /></svg>
);
const VSCode = () => <svg {...icon}><path d="M22 0L1 18.500 4 21.500 22 7z" fill="#0f6db0" /><path d="M22 30L1 11.500 4 8.500 22 23z" fill="#0c5f9e" /><path d="M22 0l8 3.500v23L22 30z" fill="#2489ca" /></svg>;
const ChromeIcon = () => (
  <svg {...icon}><circle cx="15" cy="15" r="15" fill="#d9ab17" /><path d="M15 15L2 7.500A15 15 0 0 1 28 7.500H15z" fill="#c6362b" /><path d="M2 7.500A15 15 0 0 0 15 30l7-11-7-4z" fill="#2b8a46" /><circle cx="15" cy="15" r="7" fill="#ddd" /><circle cx="15" cy="15" r="5.600" fill="#2a65cc" /></svg>
);
const Snip = () => (
  <svg {...icon}><rect x="0" y="0" width="22" height="22" rx="2.500" fill="#cfcfcf" /><path d="M4.500 17V4.500H18" fill="none" stroke="#c93a12" strokeWidth="3" strokeDasharray="3 2" /><path d="M8 18h14M17.500 7v15" stroke="#7b8085" strokeWidth="2.500" /><circle cx="27" cy="16" r="2.500" fill="none" stroke="#2292c5" strokeWidth="1.800" /><circle cx="16" cy="27" r="2.500" fill="none" stroke="#2292c5" strokeWidth="1.800" /><path d="M21 18l4-1M17.500 21L17 25" stroke="#2292c5" strokeWidth="2" /></svg>
);
const FileIcon = () => <svg {...icon}><path d="M4 1h15l7 7v21H4z" fill="#c6c6c6" /><path d="M19 1v7h7" fill="#eee" stroke="#777" /></svg>;
const Folder = () => <svg {...icon}><path d="M0 4c0-1 0-2 2-2h8l3 3h15v4H0z" fill="#b07d05" /><path d="M0 7h11l2-2h15c2 0 2 1 2 2v22H0z" fill="#d2a52e" /><path d="M5 29v-5c0-2 1-3 3-3h14c2 0 3 1 3 3v5z" fill="#0f71b0" /><path d="M9 24.500h12" stroke="#0a4d80" strokeWidth="1.500" /></svg>;
const Gear = () => (
  <svg {...icon}><g fill="#6b737c">{[0, 60, 120, 180, 240, 300].map((a) => <path key={a} d="M10 7l1.500-7h7l1.500 7z" transform={`rotate(${a + 30} 15 15)`} />)}<circle cx="15" cy="15" r="10.500" /></g><circle cx="15" cy="15" r="7" fill="#ccd0d4" /><circle cx="15" cy="15" r="5.400" fill="#0f5ea8" /></svg>
);
const Edge = () => (
  <svg {...icon}><defs><linearGradient id="eg" x1="0" y1="0" x2="1" y2=".5"><stop offset="0" stopColor="#1d86c8" /><stop offset=".55" stopColor="#2fa8b5" /><stop offset="1" stopColor="#58c345" /></linearGradient></defs>
    <path d="M0 14C1 5 8 0 15 0c9 0 15 6 15 13 0 5-4 8-8 8-3 0-5-1-4-3 2-4-1-8-6-8C6 10 1 12 0 14z" fill="url(#eg)" /><path d="M0 14c2-3 7-5 12-4-4 2-6 6-4 11 2 5 6 8 11 8C10 32-1 26 0 14z" fill="#0f67b4" /><path d="M12 11c-3 3-3 8 1 11s10 3 14 1c-3 5-7 7-12 7-6-3-10-8-8-13 1-3 3-5 5-6z" fill="#10438a" /></svg>
);
const Todo = () => <svg {...icon}><path d="M0 16l5-6 7 7-5 6z" fill="#1d4f9f" /><path d="M5 21L24 3l6 5-19 20z" fill="#3384c9" /></svg>;
const WhatsApp = () => <svg {...icon}><path d="M0 30l2-8A14.500 14.500 0 1 1 8 28z" fill="#d0d0d0" /><path d="M3.500 26.500l1-5A12 12 0 1 1 9 26z" fill="#2f9e45" /><path d="M10 8l3 1 1 3-1 2c1 2 2 3 4 4l2-2 4 2c0 3-2 4-4 4-6 0-12-6-12-10 0-2 1-4 3-4z" fill="#d8d8d8" /></svg>;
const ExcelIcon = () => (
  <svg {...icon}><path d="M8 1h22v28H8z" fill="#17653d" /><path d="M8 1h11v9H8z" fill="#1c8a52" /><path d="M19 1h11v9H19z" fill="#2fa868" /><path d="M19 10h11v8H19z" fill="#188049" /><path d="M8 10h11v8H8z" fill="#14603a" /><path d="M8 18h22v11H8z" fill="#11472b" /><path d="M19 18h11v6H19z" fill="#146238" /><rect x="1" y="7" width="16" height="16" rx="1.500" fill="#0f6b3b" /><path d="M6 11l6 8M12 11l-6 8" stroke="#e6e6e6" strokeWidth="2" /></svg>
);

export default function App() {
  return (
    <Window>
      <Global />
      <Header>
        <HeaderArt width="640" height="81" viewBox="0 0 640 81" fill="none" stroke="#22613f" strokeWidth="5">
          <path d="M31 18H243M253 18h20c6 0 9 3 12 6l52 36c5 4 8 4 13 4h132l28-33h130" />
          <path d="M113 42h115c8 0 12 3 18 8l60 34M18 78h123l28-24h108M288 54h6c8 0 10 3 14 6l16 12c5 4 8 5 13 5h206l74-85M565 82l80-82" />
          <circle cx="26" cy="18" r="4.500" strokeWidth="3.500" /><circle cx="248" cy="18" r="4.500" strokeWidth="3.500" /><circle cx="108" cy="42" r="4.500" strokeWidth="3.500" /><circle cx="283" cy="54" r="4.500" strokeWidth="3.500" /><circle cx="14" cy="78" r="4.500" strokeWidth="3.500" />
          <circle cx="51" cy="50" r="21" strokeWidth="6" /><path d="M41 61V41h19M41 41l19 18" strokeWidth="6" />
          <circle cx="368" cy="22" r="34" strokeWidth="7" /><path d="M352 8h25v27M377 8l-24 29" strokeWidth="8" />
        </HeaderArt>
        <TitleRow>
          <Slot $w={210} $align="flex-start">
            <Slot $w={69}><svg width="16" height="16" viewBox="0 0 16 16"><path d="M0 0h16v16H0z" fill="#fff" /><path d="M2 1.500h12V9H2zM4 11h8v5H4z" fill="#217346" /><path d="M5 12h6v3.500H9v-2H7.500v2H5z" fill="#fff" /></svg></Slot>
            <svg width="90" height="16" viewBox="0 0 90 16" fill="none" stroke="#5e9c79" strokeWidth="2.200"><path d="M-6 5H4c8 0 9 8-1 9M-2 0l-5 5 5 5" /><path d="M19 4l3 3 3-3" strokeWidth="1.300" /><path d="M56 5H46c-8 0-9 8 1 9M52 0l5 5-5 5" /><path d="M67 4l3 3 3-3" strokeWidth="1.300" /></svg>
            <Slot $w={14}><svg width="6" height="8" viewBox="0 0 6 8"><path d="M0 1h6" stroke="#fff" strokeWidth="1.300" /><path d="M0 4h6L3 7z" fill="#fff" /></svg></Slot>
          </Slot>
          <TitleText>{"Final Github  -  Excel"}</TitleText>
          <UserName>Kartik Jain</UserName><Avatar>KJ</Avatar>
          <Slot $w={86}><svg width="17" height="14" viewBox="0 0 17 14" fill="none" stroke="#fff" strokeWidth="1.300"><path d="M.7.700h15.600v12.600H.700zM.7 3.500h15.600M8.500 12V6M5.500 8.500l3-3 3 3" /></svg></Slot>
          <Slot $w={30}><svg width="13" height="3" viewBox="0 0 13 3"><path d="M0 1h13" stroke="#fff" strokeWidth="1.300" /></svg></Slot>
          <Slot $w={84}><svg width="13" height="13" viewBox="0 0 13 13" fill="none" stroke="#fff" strokeWidth="1.200"><rect x=".6" y="2.800" width="9.500" height="9.500" rx="1.500" /><path d="M3 .600h7c1.500 0 2.400 1 2.400 2.400V10" /></svg></Slot>
          <Slot $w={31}><svg width="13" height="13" viewBox="0 0 13 13" stroke="#fff" strokeWidth="1.300"><path d="M.5.500l12 12M12.500.500l-12 12" /></svg></Slot>
        </TitleRow>
        <TabRow>
          <Tab $w={74}>File</Tab><Slot $w={2} /><Tab $w={66} $on>Home</Tab><Tab $w={64}>Insert</Tab><Tab $w={106}>Page Layout</Tab><Tab $w={88}>Formulas</Tab>
          <Tab $w={58}>Data</Tab><Tab $w={75}>Review</Tab><Tab $w={58}>View</Tab><Tab $w={60}>Help</Tab>
          <Slot $w={52}><svg width="15" height="20" viewBox="0 0 15 20" fill="none" stroke="#fff" strokeWidth="1.400"><path d="M4.500 14c0-3-3.700-4-3.700-7.500a6.700 6 0 0 1 13.400 0C14.200 10 10.500 11 10.500 14zM4.500 16.500h6M5.500 19h4" /></svg></Slot>
          <Tab $w={185}><Label $ls={0.08}>Tell me what you want to do</Label></Tab>
          <Slot $w={1012} $align="flex-end"><svg width="18" height="16" viewBox="0 0 18 16" fill="none" stroke="#fff" strokeWidth="1.300"><path d="M.7.700h16.600v11H7L3.500 15v-3.300H.700z" /></svg></Slot>
        </TabRow>
      </Header>

      <Ribbon>
        <ClipboardGroup /><FontGroup /><AlignGroup /><NumberGroup /><StylesGroup /><CellsGroup /><EditingGroup />
        <Group $w={77}>
          <GroupBody><Big $w={76}><BigIcon><svg width="14" height="14" viewBox="0 0 14 14"><circle cx="7" cy="7" r="6.500" fill="#ff9a1a" opacity=".6" /><circle cx="7" cy="7" r="5" fill="#ff9500" /></svg></BigIcon><BigLine>Add-ins</BigLine></Big></GroupBody>
          <GroupName>Add-ins</GroupName>
        </Group>
        <Collapse><svg width="12" height="7" viewBox="0 0 12 7"><path d="M.5 6.500L6 1l5.500 5.500" fill="none" stroke="#444" strokeWidth="1.300" /></svg></Collapse>
      </Ribbon>

      <FormulaBar>
        <Field $w={127}>A1<Triangle /></Field>
        <Slot $w={37}><svg width="4" height="30" viewBox="0 0 4 30" fill="#a5a5a5"><path d="M0 8h4v3H0zM0 14h4v3H0zM0 20h4v3H0z" /></svg></Slot>
        <Field $w={137}>
          <Slot $w={30}><svg width="15" height="13" viewBox="0 0 15 13"><path d="M1 0l13 13M14 0L1 13" stroke="#c0c0c0" strokeWidth="2" /></svg></Slot>
          <svg width="17" height="13" viewBox="0 0 17 13"><path d="M1 7l4.500 4.500L16 1" fill="none" stroke="#c0c0c0" strokeWidth="2.800" /></svg>
          <Slot $w={31}><Fx>f<small>x</small></Fx></Slot>
        </Field>
        <Input $w={1604} $ml={3}><span /><svg width="9" height="6" viewBox="0 0 9 6"><path d="M.5.500l4 4 4-4" fill="none" stroke="#555" strokeWidth="2.200" /></svg></Input>
      </FormulaBar>

      <Main>
        <Sheet>
          <HeadRow>
            <Corner><svg width="15" height="15" viewBox="0 0 15 15"><path d="M15 0v15H0z" fill="#b2b2b2" /></svg></Corner>
            <ColHead $w={273} $on>A</ColHead><ColHead $w={114}>B</ColHead>
            {letters.map((l) => <ColHead key={l} $w={80}>{l}</ColHead>)}
          </HeadRow>
          {Array.from({ length: 29 }, (_, i) => <GridLine key={i} r={i + 1} />)}
          <Selection />
          <RevenueChart />
          <SheetTitle>DASHBOARD</SheetTitle>
          <ArrowBack width="119" height="38" viewBox="0 0 119 38"><path d="M0 13L34 1v7h46c26 0 39 6 39 14 0 12-18 15-40 15-24 0-50 0-72-3l58-1c20 0 31-3 31-9 0-5-6-7-19-7H34v9z" /></ArrowBack>
          <ArrowNext width="131" height="32" viewBox="0 0 131 32"><path d="M0 10c30 3 68 4 95 0V0l36 16-36 15v-6C60 26 30 22 0 10z" /></ArrowNext>
        </Sheet>
        <VScroll>
          <ScrollBtn $w={19} $h={19}><svg width="9" height="6" viewBox="0 0 9 6"><path d="M0 6L4.500 0 9 6z" fill="#222" /></svg></ScrollBtn>
          <ScrollBtn $w={19} $h={650} /><ScrollGap />
          <ScrollBtn $w={19} $h={18}><svg width="9" height="6" viewBox="0 0 9 6"><path d="M0 0l4.500 6L9 0z" fill="#222" /></svg></ScrollBtn>
        </VScroll>
      </Main>

      <SheetTabs>
        <Nav><svg width="5" height="10" viewBox="0 0 5 10"><path d="M5 0v10L0 5z" fill="#bdbdbd" /></svg><svg width="5" height="10" viewBox="0 0 5 10"><path d="M0 0v10l5-5z" fill="#0f6b3b" /></svg></Nav>
        {tabs.map(([t, w], i) => <SheetTab key={t} $w={w} $line={i < 8}>{t}</SheetTab>)}
        <SheetTab $w={97} $on>Revenue</SheetTab>
        <SheetTab $w={86}>Top 10 R</SheetTab>
        <TabDots>...</TabDots>
        <Slot $w={34}><svg width="20" height="20" viewBox="0 0 20 20" fill="none" stroke="#777"><circle cx="10" cy="11" r="9.500" /><path d="M10 6v10M5 11h10" strokeWidth="1.800" /></svg></Slot>
        <HDots><svg width="4" height="14" viewBox="0 0 4 14" fill="#a5a5a5"><path d="M0 0h3v3H0zM0 5.500h3v3H0zM0 11h3v3H0z" /></svg></HDots>
        <HTrack>
          <HLeft><ScrollBtn $w={19} $h={19}><svg width="5" height="9" viewBox="0 0 5 9"><path d="M5 0v9L0 4.500z" fill="#222" /></svg></ScrollBtn><ScrollBtn $w={131} $h={19} /></HLeft>
          <ScrollBtn $w={19} $h={19}><svg width="5" height="9" viewBox="0 0 5 9"><path d="M0 0v9l5-4.500z" fill="#222" /></svg></ScrollBtn>
        </HTrack>
      </SheetTabs>

      <Status>
        <Slot $w={69} $align="flex-start"><Slot $w={54}>Ready</Slot></Slot>
        <Slot $w={23} $align="flex-start"><svg width="20" height="18" viewBox="0 0 20 18" fill="none" stroke="#444" strokeWidth="1.200"><path d="M8 .800A8 8 0 0 0 6 15.500" strokeDasharray="4 1.500" /><path d="M6 5.500h5M13 3v5M11 5.500h5" /><path d="M9 8l3 3-3 6M11 10l8 7M18 9l-7 8" strokeWidth="1.800" /></svg></Slot>
        <Slot $w={1456} $align="flex-start">Accessibility: Investigate</Slot>
        <ViewBtn $w={50} $on><svg width="16" height="16" viewBox="0 0 16 16" fill="none" stroke="#666"><path d="M.5.500h15v15H.500zM5.500 0v16M10.500 0v16M0 5.500h16M0 10.500h16" /></svg></ViewBtn>
        <ViewBtn $w={49}><svg width="17" height="16" viewBox="0 0 17 16" fill="none" stroke="#666"><path d="M.5.500h16v15H.500zM4.500 2.500h8v11h-8zM6 5.500h5M6 8h5M6 10.500h5" /></svg></ViewBtn>
        <ViewBtn $w={51}><svg width="17" height="16" viewBox="0 0 17 16" fill="none" stroke="#666"><path d="M.5.500h16v15H.500zM5.500 0v9.500M11.500 0v9.500M.5 9.500h11" /></svg></ViewBtn>
        <Slot $w={16} $align="flex-end"><svg width="10" height="2" viewBox="0 0 10 2"><path d="M0 1h10" stroke="#333" strokeWidth="1.200" /></svg></Slot>
        <Zoom><Thumb /></Zoom>
        <svg width="10" height="10" viewBox="0 0 10 10"><path d="M0 5h10M5 0v10" stroke="#333" strokeWidth="1.200" /></svg>
        <Slot $w={48} $align="flex-end">100%</Slot>
      </Status>

      <Taskbar>
        <Weather>
          <svg width="31" height="28" viewBox="0 0 31 28"><defs><linearGradient id="sun" x1="0" y1="0" x2="0" y2="1"><stop offset="0" stopColor="#d8a917" /><stop offset="1" stopColor="#cf5f10" /></linearGradient></defs><circle cx="16" cy="13.500" r="13" fill="url(#sun)" /><path d="M5 6h5M14 6h15M4 11h26M1 15.500h14M18 15.500h7M1 20h22" stroke="#dccba4" strokeWidth="2" strokeLinecap="round" /></svg>
          <WeatherText><div>31°C</div><Dim>Haze</Dim></WeatherText>
        </Weather>
        <Slot $w={52} $align="flex-end"><svg width="29" height="29" viewBox="0 0 29 29"><defs><linearGradient id="win" x1="0" y1="0" x2="1" y2="1"><stop offset="0" stopColor="#62c3cc" /><stop offset="1" stopColor="#0b74cc" /></linearGradient></defs><path d="M0 0h14v14H0zM15 0h14v14H15zM0 15h14v14H0zM15 15h14v14H15z" fill="url(#win)" /></svg></Slot>
        <Search>
          <svg width="19" height="19" viewBox="0 0 19 19" fill="none" stroke="#bdbdbd" strokeWidth="1.800"><circle cx="8" cy="8" r="6.500" /><path d="M12.500 12.500l5.500 5.500" /></svg>
          <SearchText>Type to search</SearchText>
          <svg width="60" height="28" viewBox="0 0 60 28"><path d="M1 4c5-4 9 4 10 11l2 9-3-6C4 16 1 10 1 4z" fill="#bcbcbc" /><path d="M2 4l11 22" stroke="#777" strokeWidth=".8" /><path d="M18 13C16 3 26-1 31 3c5-3 12-4 12-1 0 8-9 17-16 17-5 1-9-2-9-6z" fill="#c79d62" /><path d="M31 3l4 8 7-9z" fill="#8d6230" /><path d="M23 4c4 0 9 5 10 11l-3 2c-1-5-5-8-9-9z" fill="#b53450" /><circle cx="21" cy="15" r="4" fill="#c8465f" /><path d="M24 17l15 5M28 15l8 11M38 18l-6 8M24 12l6 10" stroke="#c8465f" strokeWidth="2.400" /><path d="M48 4l11-1-2 20-11 2z" fill="#b61d38" /><path d="M48 4l2-1 2 1-3 20-3 1z" fill="#d8cbb0" /></svg>
        </Search>
        <AppButton><Opera /></AppButton><AppButton><Brave /><Run /></AppButton><AppButton><VSCode /></AppButton><AppButton><ChromeIcon /></AppButton>
        <AppButton><Snip /></AppButton><AppButton><FileIcon /></AppButton><AppButton><Folder /><Run /></AppButton><AppButton><Gear /></AppButton>
        <AppButton><Edge /></AppButton><AppButton><Todo /></AppButton><AppButton><ZoomApp>zoom</ZoomApp></AppButton>
        <AppButton><WhatsApp /><Badge>11</Badge></AppButton><AppButton $on><ExcelIcon /><Run $on /></AppButton>
        <Slot $w={154}><svg width="14" height="9" viewBox="0 0 14 9"><path d="M1 8l6-6.500L13 8" fill="none" stroke="#cfcfcf" strokeWidth="1.800" /></svg></Slot>
        <Slot $w={0}><Slot $w={74}><svg width="21" height="22" viewBox="0 0 21 22" fill="none" stroke="#bdbdbd" strokeWidth="1.400"><path d="M1 9c0-10 14-11 17.500-3M18.500 1v5h-5M2 20v-5.500h5M2 14.500c2 3 3 4 6.500 5" /><circle cx="15.500" cy="16.500" r="5.200" fill="#d07c06" stroke="none" /></svg></Slot></Slot>
        <Stack $w={22}>ENG<br />IN</Stack>
        <Slot $w={72}><svg width="20" height="16" viewBox="0 0 20 16" fill="none" stroke="#cfcfcf" strokeWidth="1.400"><path d="M.5 5.500a13.500 13.500 0 0 1 19 0M3.500 8.500a9.300 9.300 0 0 1 13 0M6.500 11.500a5 5 0 0 1 7 0" /><circle cx="10" cy="14" r="1.600" fill="#cfcfcf" stroke="none" /></svg></Slot>
        <Slot $w={20}><svg width="20" height="14" viewBox="0 0 20 14" fill="none" stroke="#cfcfcf" strokeWidth="1.300"><path d="M.7 4.500h3L8 .800v12.400L3.700 9.500h-3zM12 4l6.500 6.500M18.500 4L12 10.500" /></svg></Slot>
        <Slot $w={34}><svg width="20" height="16" viewBox="0 0 20 16" fill="none" stroke="#cfcfcf" strokeWidth="1.400"><path d="M7 2.800h8c1.500 0 2 .7 2 2v8c0 1.300-.5 2-2 2H3.500c-1.500 0-2-.7-2-2V9M18.500 6.500v4" /><path d="M8 5h4l-2 8H4V9h2z" fill="#cfcfcf" stroke="none" /><path d="M4-1L0 5h3L1.500 9 6 3.500H3.500z" fill="#cfcfcf" stroke="none" /></svg></Slot>
        <Stack $w={92} $right>11:50<br />17-10-2023</Stack>
        <Slot $w={38}><svg width="17" height="19" viewBox="0 0 17 19"><path d="M8.500 0C4 0 2 3.500 2 7v4l-2 4v.500h17V15l-2-4V7c0-3.500-2-7-6.500-7zM5.500 17a3 2 0 0 0 6 0z" fill="#79b9cd" /></svg></Slot>
      </Taskbar>
    </Window>
  );
}
